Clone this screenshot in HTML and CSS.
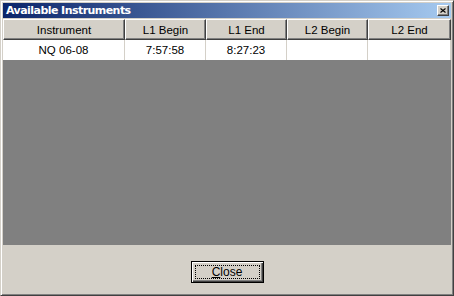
FILE: index.html
```html
<!DOCTYPE html>
<html lang="en">
  <head>
    <meta charset="utf-8">
    <title>Available Instruments</title>
    <link rel="stylesheet" href="styles.css">
  </head>
  <body>
    <div class="window">
      <div class="titlebar">
        <span class="title">Available Instruments</span>
        <span class="closebox">
          <svg width="6" height="5" viewBox="0 0 6 5">
            <path d="M0.5 0.5l5 4M5.5 0.5l-5 4" stroke="#000" stroke-width="1.1" fill="none"/>
          </svg>
        </span>
      </div>
      <div class="list">
        <div class="header">
          <div class="col">Instrument</div>
          <div class="col">L1 Begin</div>
          <div class="col">L1 End</div>
          <div class="col">L2 Begin</div>
          <div class="col">L2 End</div>
        </div>
        <div class="row">
          <div class="cell">NQ 06-08</div>
          <div class="cell">7:57:58</div>
          <div class="cell">8:27:23</div>
          <div class="cell"></div>
          <div class="cell"></div>
        </div>
        <div class="empty"></div>
      </div>
      <div class="footer">
        <button class="btn"><span class="focus"><u>C</u>lose</span></button>
      </div>
    </div>
  </body>
</html>
```

FILE: styles.css
```css
body {
    margin: 0;
    font-family: "Liberation Sans", Arial, sans-serif;
    font-size: 11.5px;
    color: black;
}

.window {
    width: 454px;
    height: 296px;
    box-sizing: border-box;
    background-color: #d4d0c8;
    border-top: 1px solid #d4d0c8;
    border-left: 1px solid #d4d0c8;
    border-right: 1px solid #404040;
    border-bottom: 1px solid #404040;
    box-shadow: inset 1px 1px 0 #ffffff, inset -1px -1px 0 #808080;
    padding: 2px;
    display: flex;
    flex-direction: column;
}

.titlebar {
    height: 15px;
    margin-bottom: 1px;
    background: linear-gradient(to right, #0a246a, #a6caf0);
    display: flex;
    align-items: center;
    justify-content: space-between;
    padding: 0 2px 0 3px;
}

.title {
    color: white;
    font-family: "DejaVu Sans", Verdana, sans-serif;
    font-weight: bold;
    font-size: 11px;
    letter-spacing: -0.55px;
}

.closebox {
    width: 12px;
    height: 11px;
    box-sizing: border-box;
    background-color: #d4d0c8;
    border-top: 1px solid #ffffff;
    border-left: 1px solid #ffffff;
    border-right: 1px solid #404040;
    border-bottom: 1px solid #404040;
    box-shadow: inset -1px -1px 0 #808080;
    display: flex;
    align-items: center;
    justify-content: center;
}

.list {
    flex: 1;
    display: flex;
    flex-direction: column;
    background-color: #808080;
}

.header, .row {
    display: grid;
    grid-template-columns: 122px 81px 81px 81px 1fr;
}

.col {
    height: 21px;
    box-sizing: border-box;
    background-color: #d4d0c8;
    border-top: 1px solid #ffffff;
    border-left: 1px solid #ffffff;
    border-right: 1px solid #404040;
    border-bottom: 1px solid #404040;
    box-shadow: inset -1px -1px 0 #808080;
    display: flex;
    align-items: center;
    justify-content: center;
}

.row {
    background-color: white;
}

.cell {
    height: 20px;
    box-sizing: border-box;
    border-right: 1px solid #d4d0c8;
    display: flex;
    align-items: center;
    justify-content: center;
}

.empty {
    flex: 1;
}

.footer {
    height: 48px;
    display: flex;
    justify-content: center;
    align-items: flex-start;
    padding-top: 16px;
    box-sizing: border-box;
}

.btn {
    width: 73px;
    height: 22px;
    padding: 3px;
    margin: 0;
    font-family: "Liberation Sans", Arial, sans-serif;
    font-size: 12px;
    color: black;
    background-color: #d4d0c8;
    border: 1px solid black;
    box-shadow: inset 1px 1px 0 #ffffff, inset -1px -1px 0 #404040, inset -2px -2px 0 #808080;
    display: flex;
}

.focus {
    flex: 1;
    border: 1px dotted black;
    display: flex;
    align-items: center;
    justify-content: center;
}
```
